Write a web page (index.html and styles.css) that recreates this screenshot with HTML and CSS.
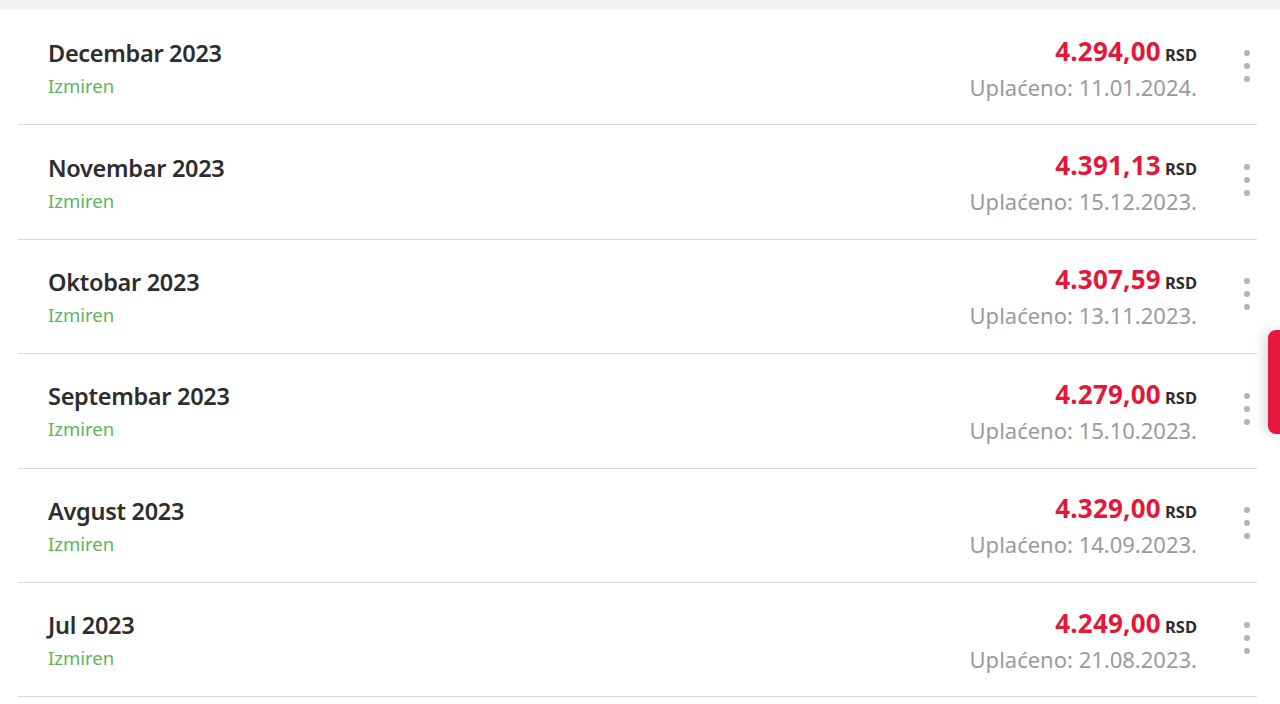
FILE: index.html
```html
<!DOCTYPE html>
<html lang="sr">
<head>
<meta charset="utf-8">
<link rel="stylesheet" href="styles.css">
</head>
<body>
<div class="topband"></div>
<ul class="list">
  <li class="row">
    <div class="left"><div class="title">Decembar 2023</div><div class="status">Izmiren</div></div>
    <div class="right"><div class="amount"><span class="num">4.294,00</span> <span class="cur">RSD</span></div><div class="paid">Uplaćeno: 11.01.2024.</div></div>
    <div class="kebab"><i></i><i></i><i></i></div>
  </li>
  <li class="row">
    <div class="left"><div class="title">Novembar 2023</div><div class="status">Izmiren</div></div>
    <div class="right"><div class="amount"><span class="num">4.391,13</span> <span class="cur">RSD</span></div><div class="paid">Uplaćeno: 15.12.2023.</div></div>
    <div class="kebab"><i></i><i></i><i></i></div>
  </li>
  <li class="row">
    <div class="left"><div class="title">Oktobar 2023</div><div class="status">Izmiren</div></div>
    <div class="right"><div class="amount"><span class="num">4.307,59</span> <span class="cur">RSD</span></div><div class="paid">Uplaćeno: 13.11.2023.</div></div>
    <div class="kebab"><i></i><i></i><i></i></div>
  </li>
  <li class="row">
    <div class="left"><div class="title">Septembar 2023</div><div class="status">Izmiren</div></div>
    <div class="right"><div class="amount"><span class="num">4.279,00</span> <span class="cur">RSD</span></div><div class="paid">Uplaćeno: 15.10.2023.</div></div>
    <div class="kebab"><i></i><i></i><i></i></div>
  </li>
  <li class="row">
    <div class="left"><div class="title">Avgust 2023</div><div class="status">Izmiren</div></div>
    <div class="right"><div class="amount"><span class="num">4.329,00</span> <span class="cur">RSD</span></div><div class="paid">Uplaćeno: 14.09.2023.</div></div>
    <div class="kebab"><i></i><i></i><i></i></div>
  </li>
  <li class="row">
    <div class="left"><div class="title">Jul 2023</div><div class="status">Izmiren</div></div>
    <div class="right"><div class="amount"><span class="num">4.249,00</span> <span class="cur">RSD</span></div><div class="paid">Uplaćeno: 21.08.2023.</div></div>
    <div class="kebab"><i></i><i></i><i></i></div>
  </li>
</ul>
<div class="sidetab"></div>
</body>
</html>
```
FILE: styles.css
```css
html, body {
  margin: 0;
  padding: 0;
  background: #fff;
  font-family: "Noto Sans", "Open Sans", sans-serif;
  overflow: hidden;
  height: 704px;
}
.topband {
  height: 10px;
  background: #f0f1f3;
}
.list {
  list-style: none;
  margin: 0 23px 0 18px;
  padding: 1px 0 0;
}
.row {
  display: flex;
  align-items: center;
  height: 113.4px;
  border-bottom: 1px solid #d8d8d8;
  padding: 0 0 0 30px;
  box-sizing: content-box;
}
.left {
  flex: 1;
  display: flex;
  flex-direction: column;
  gap: 6px;
  padding-top: 1px;
}
.title {
  font-size: 23.5px;
  font-weight: 600;
  color: #2d2d2d;
  line-height: 30px;
  letter-spacing: -0.3px;
}
.status {
  font-size: 18.5px;
  color: #5bb560;
  line-height: 24px;
}
.right {
  display: flex;
  flex-direction: column;
  align-items: flex-end;
  gap: 2px;
  padding-top: 2px;
}
.amount {
  line-height: 30px;
}
.num {
  font-size: 26px;
  font-weight: 700;
  color: #e3173a;
  letter-spacing: 0.2px;
}
.cur {
  font-size: 16.5px;
  font-weight: 700;
  color: #2d2d2d;
}
.paid {
  font-size: 22px;
  color: #9a9a9a;
  line-height: 30px;
}
.kebab {
  width: 60px;
  display: flex;
  flex-direction: column;
  align-items: center;
  gap: 7px;
  margin-top: -4px;
}
.kebab i {
  width: 6px;
  height: 6px;
  border-radius: 50%;
  background: #b3b3b3;
  margin-left: 40px;
}
.sidetab {
  position: absolute;
  right: 0;
  top: 330px;
  width: 12px;
  height: 104px;
  background: #e8173d;
  border-radius: 8px 0 0 8px;
  box-shadow: -4px 0 12px rgba(0,0,0,0.15);
}
```
